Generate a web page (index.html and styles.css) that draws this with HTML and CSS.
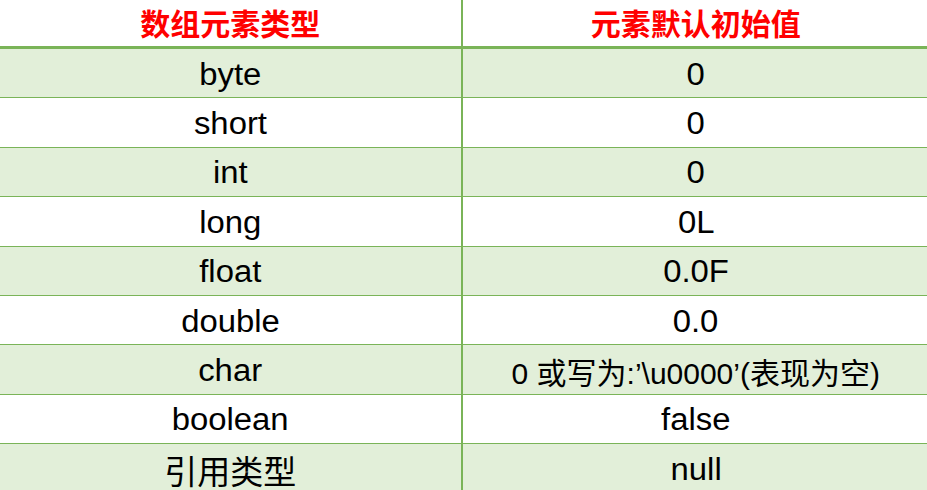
FILE: index.html
```html
<!DOCTYPE html>
<html lang="zh-CN">
<head>
<meta charset="utf-8">
<title>数组元素默认初始值</title>
<link rel="stylesheet" href="styles.css">
</head>
<body>
<div class="table">
  <div class="head cell left">数组元素类型</div>
  <div class="head cell">元素默认初始值</div>

  <div class="cell left alt"><span class="t">byte</span></div>
  <div class="cell alt"><span class="t">0</span></div>

  <div class="cell left"><span class="t">short</span></div>
  <div class="cell"><span class="t">0</span></div>

  <div class="cell left alt"><span class="t">int</span></div>
  <div class="cell alt"><span class="t">0</span></div>

  <div class="cell left"><span class="t">long</span></div>
  <div class="cell"><span class="t">0L</span></div>

  <div class="cell left alt"><span class="t">float</span></div>
  <div class="cell alt"><span class="t">0.0F</span></div>

  <div class="cell left"><span class="t">double</span></div>
  <div class="cell"><span class="t">0.0</span></div>

  <div class="cell left alt"><span class="t">char</span></div>
  <div class="cell alt"><span class="mixed">0 或写为:’\u0000’(表现为空)</span></div>

  <div class="cell left"><span class="t">boolean</span></div>
  <div class="cell"><span class="t">false</span></div>

  <div class="cell left alt"><span class="cjk">引用类型</span></div>
  <div class="cell alt"><span class="t">null</span></div>
</div>
</body>
</html>
```

FILE: styles.css
```css
html, body {
  margin: 0;
  padding: 0;
  background: #ffffff;
  overflow: hidden;
}

.table {
  width: 929px;
  display: grid;
  grid-template-columns: 462.5px 1fr;
  grid-template-rows: 49px repeat(9, 49.4px);
  font-family: "Liberation Sans", Arial, "Noto Sans CJK SC", sans-serif;
  color: #000000;
}

.cell {
  box-sizing: border-box;
  display: flex;
  align-items: center;
  justify-content: center;
  border-bottom: 1.5px solid #7ab458;
  font-size: 31px;
  padding-top: 3px;
  white-space: nowrap;
}

.cell.left {
  border-right: 2px solid #7ab458;
}

.cell.alt {
  background: #e2efd9;
}

.head {
  border-bottom: 3px solid #7ab458;
  color: #ff0000;
  font-weight: bold;
  font-size: 30px;
  font-family: "Noto Sans CJK SC", sans-serif;
  padding-top: 0;
  padding-bottom: 2px;
}

.t {
  display: inline-block;
  transform: scaleX(1.06);
}

.mixed {
  display: inline-block;
  font-size: 30px;
}

.cjk {
  display: inline-block;
  font-family: "Noto Sans CJK SC", sans-serif;
  font-size: 33px;
}
```
